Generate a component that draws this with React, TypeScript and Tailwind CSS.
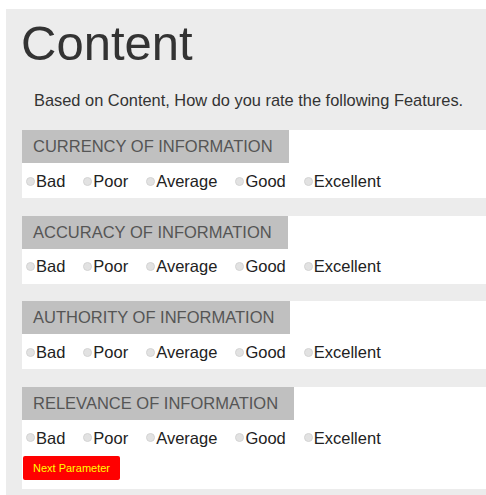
import { useState } from "react"

const parameters = [
  "Currency of Information",
  "Accuracy of Information",
  "Authority of Information",
  "Relevance of Information",
]

const ratings = ["Bad", "Poor", "Average", "Good", "Excellent"]

function RatingRow({ name }: { name: string }) {
  const [value, setValue] = useState<string | null>(null)
  return (
    <div className="flex h-[35px] items-center pl-[4px] pt-[1px]">
      {ratings.map((r) => (
        <label
          key={r}
          onClick={() => setValue(r)}
          className="mr-[18px] flex cursor-pointer items-center text-[16.5px] text-[#222]"
        >
          <span
            aria-label={`${name} ${r}`}
            className={`mr-[1px] inline-block h-[9px] w-[9px] rounded-full border ${
              value === r ? "border-[#888] bg-[#888]" : "border-[#d4d4d4] bg-[#e2e2e2]"
            }`}
          />
          {r}
        </label>
      ))}
    </div>
  )
}

export default function App() {
  return (
    <div className="h-[495px] overflow-hidden bg-white pl-[6px] pt-[9px] font-['Liberation_Sans',Arial,sans-serif]">
      <div className="h-full bg-[#ececec] pl-[16px] pt-[8px]">
        <h1 className="ml-[-1px] text-[49px] leading-[53px] font-normal text-[#333]">Content</h1>
        <p className="mb-[20px] mt-[20px] ml-[12px] text-[16.4px] leading-[20px] text-[#333]">
          Based on Content, How do you rate the following Features.
        </p>

        {parameters.map((p, i) => (
          <div key={p} className="mb-[17.67px] bg-white">
            <div className="inline-flex h-[33px] items-center bg-[#c0c0c0] pl-[11px] pr-[16px] text-[16.5px] uppercase text-[#555]">
              {p}
            </div>
            <RatingRow name={p} />
            {i === parameters.length - 1 && (
              <div className="pb-[9px] pl-[1px]">
                <button
                  type="button"
                  className="h-[24px] w-[97px] rounded-[2px] bg-[#f00] text-[11px] text-[#ffff00]"
                >
                  Next Parameter
                </button>
              </div>
            )}
          </div>
        ))}
      </div>
    </div>
  )
}
